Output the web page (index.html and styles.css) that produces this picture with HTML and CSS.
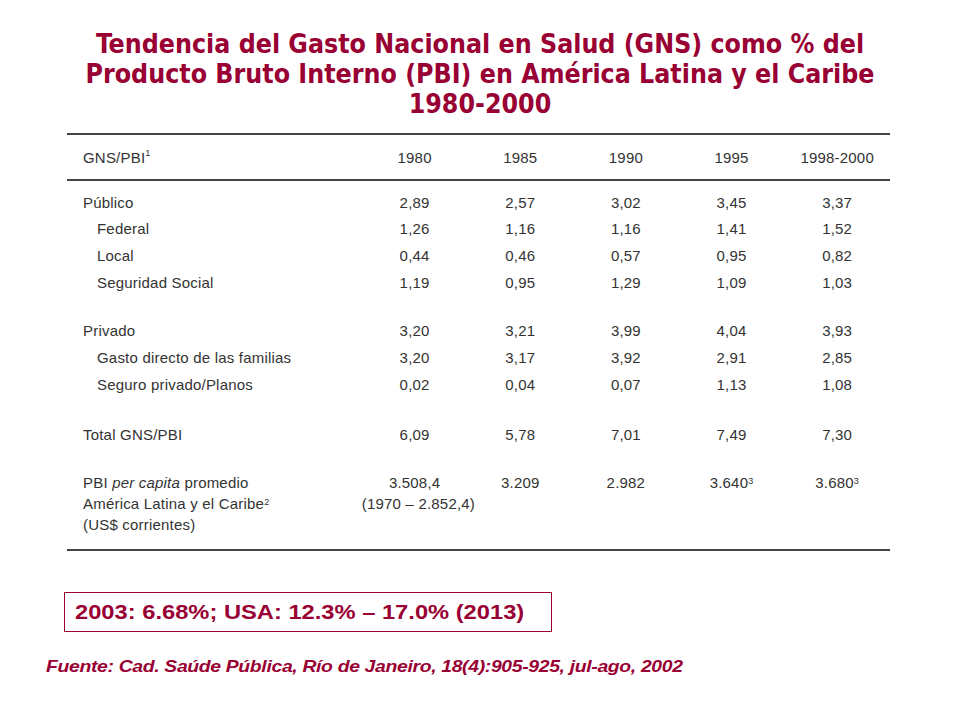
FILE: index.html
```html
<!DOCTYPE html>
<html lang="es">
<head>
<meta charset="utf-8">
<title>Tendencia del GNS</title>
<link rel="stylesheet" href="styles.css">
</head>
<body>
<div class="slide">
  <h1 class="title">Tendencia del Gasto Nacional en Salud (GNS) como % del<br>Producto Bruto Interno (PBI) en América Latina y el Caribe<br>1980-2000</h1>

  <table class="data">
    <thead>
      <tr class="head">
        <th class="lab">GNS/PBI<span class="sup">1</span></th>
        <th>1980</th><th>1985</th><th>1990</th><th>1995</th><th>1998-2000</th>
      </tr>
    </thead>
    <tbody>
      <tr class="first"><td class="lab">Público</td><td>2,89</td><td>2,57</td><td>3,02</td><td>3,45</td><td>3,37</td></tr>
      <tr><td class="lab sub">Federal</td><td>1,26</td><td>1,16</td><td>1,16</td><td>1,41</td><td>1,52</td></tr>
      <tr><td class="lab sub">Local</td><td>0,44</td><td>0,46</td><td>0,57</td><td>0,95</td><td>0,82</td></tr>
      <tr><td class="lab sub">Seguridad Social</td><td>1,19</td><td>0,95</td><td>1,29</td><td>1,09</td><td>1,03</td></tr>
      <tr class="gap21"><td colspan="6"></td></tr>
      <tr><td class="lab">Privado</td><td>3,20</td><td>3,21</td><td>3,99</td><td>4,04</td><td>3,93</td></tr>
      <tr><td class="lab sub">Gasto directo de las familias</td><td>3,20</td><td>3,17</td><td>3,92</td><td>2,91</td><td>2,85</td></tr>
      <tr><td class="lab sub">Seguro privado/Planos</td><td>0,02</td><td>0,04</td><td>0,07</td><td>1,13</td><td>1,08</td></tr>
      <tr class="gap23"><td colspan="6"></td></tr>
      <tr><td class="lab">Total GNS/PBI</td><td>6,09</td><td>5,78</td><td>7,01</td><td>7,49</td><td>7,30</td></tr>
      <tr class="gap21"><td colspan="6"></td></tr>
      <tr class="multi">
        <td class="lab">PBI <i>per capita</i> promedio<br>América Latina y el Caribe<span class="sup">2</span><br>(US$ corrientes)</td>
        <td>3.508,4<br>(1970 – 2.852,4)</td><td>3.209</td><td>2.982</td><td>3.640<span class="sup">3</span></td><td>3.680<span class="sup">3</span></td>
      </tr>
    </tbody>
  </table>

  <div class="note"><span class="stretch">2003: 6.68%; USA: 12.3% – 17.0% (2013)</span></div>

  <p class="source"><span class="stretch">Fuente: Cad. Saúde Pública, Río de Janeiro, 18(4):905-925, jul-ago, 2002</span></p>
</div>
</body>
</html>
```

FILE: styles.css
```css
html, body {
  margin: 0;
  padding: 0;
  background: #ffffff;
}

.slide {
  width: 960px;
  height: 720px;
  overflow: hidden;
  padding-top: 29px;
  box-sizing: border-box;
}

.title {
  margin: 0;
  text-align: center;
  font-family: "DejaVu Sans Condensed", "DejaVu Sans", sans-serif;
  font-stretch: condensed;
  font-weight: bold;
  font-size: 26.5px;
  line-height: 30px;
  color: #990033;
}

.data {
  margin: 14px 0 0 67px;
  width: 823px;
  border-collapse: collapse;
  font-family: "Liberation Sans", Arial, sans-serif;
  font-size: 15px;
  letter-spacing: 0.2px;
  color: #333333;
  table-layout: fixed;
  border-top: 2px solid #444444;
  border-bottom: 2px solid #444444;
}

.data th, .data td {
  padding: 0;
  text-align: center;
  font-weight: normal;
  vertical-align: middle;
  width: 105px;
  white-space: nowrap;
}

.data th.lab, .data td.lab {
  text-align: left;
  width: 293px;
  padding-left: 16px;
  box-sizing: border-box;
}

.data td.sub {
  padding-left: 30px;
}

.data thead tr {
  height: 46px;
  border-bottom: 2px solid #444444;
}

.data tbody tr {
  height: 27px;
}

.data tbody tr.first td {
  padding-top: 8px;
}

.data tbody tr.first {
  height: 35px;
}

.data tbody tr.gap21 { height: 21px; }
.data tbody tr.gap23 { height: 23px; }

.data tr.multi td {
  vertical-align: top;
  line-height: 21px;
  padding-top: 3px;
  padding-bottom: 14px;
}

.sup {
  font-size: 9px;
  vertical-align: top;
  position: relative;
  top: -1px;
}

.stretch {
  display: inline-block;
  transform-origin: left center;
  white-space: nowrap;
}

.note {
  margin: 41px 0 0 64px;
  width: 488px;
  height: 40px;
  box-sizing: border-box;
  border: 1px solid #990033;
  padding-left: 10px;
  display: flex;
  align-items: center;
  font-family: "Liberation Sans", Arial, sans-serif;
  font-weight: bold;
  font-size: 20px;
  color: #990033;
}

.note .stretch {
  transform: scaleX(1.185);
}

.source {
  margin: 25px 0 0 46px;
  font-family: "Liberation Sans", Arial, sans-serif;
  font-weight: bold;
  font-style: italic;
  font-size: 17px;
  line-height: 20px;
  color: #990033;
  letter-spacing: -0.3px;
}

.source .stretch {
  transform: scaleX(1.14);
}
```
